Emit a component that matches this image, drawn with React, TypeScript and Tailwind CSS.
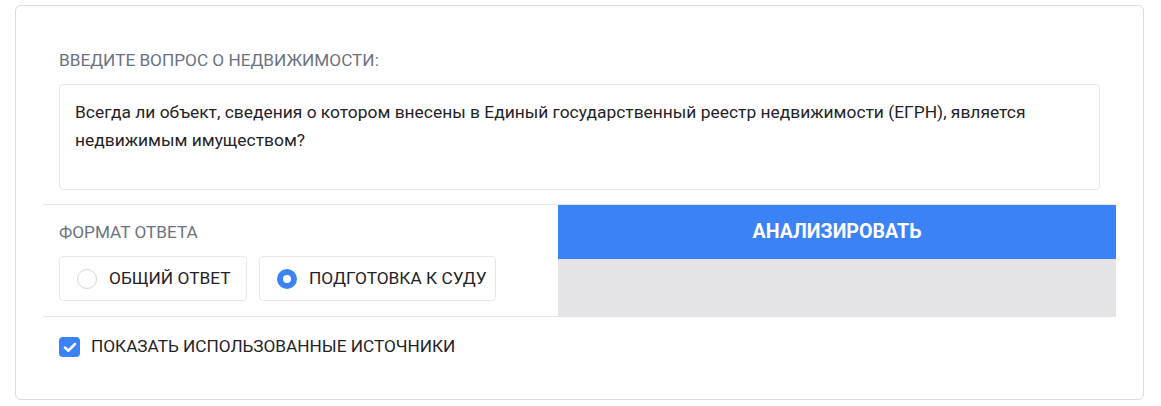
import { useState } from 'react';

type Mode = 'general' | 'court';

export default function App() {
  const [mode, setMode] = useState<Mode>('court');
  const [showSources, setShowSources] = useState(true);

  const options: { key: Mode; label: string; width: string }[] = [
    { key: 'general', label: 'ОБЩИЙ ОТВЕТ', width: 'w-[188px]' },
    { key: 'court', label: 'ПОДГОТОВКА К СУДУ', width: 'w-[237px]' },
  ];

  return (
    <div className="h-[406px] w-full bg-white pt-[5px] pl-[15px] font-['Roboto','Noto_Sans',sans-serif]">
      <div className="h-[395px] w-[1129px] rounded-md border border-[#dcdcdc] bg-white px-[27px] pt-[42px]">
        {/* Question */}
        <div className="px-4">
          <div className="text-[17.2px] leading-6 text-[#6b7280]">ВВЕДИТЕ ВОПРОС О НЕДВИЖИМОСТИ:</div>
          <div className="mt-3 h-[106px] rounded border border-[#e5e7eb] px-[15px] pt-[13px] text-[17.4px] leading-[28px] text-[#1f2328]">
            Всегда ли объект, сведения о котором внесены в Единый государственный реестр недвижимости (ЕГРН), является
            <br />
            недвижимым имуществом?
          </div>
        </div>

        {/* Format + action */}
        <div className="mt-[14px] flex border-t border-[#e5e7eb]">
          <div className="w-[515px] border-b border-[#e5e7eb] px-4 pt-[15px] pb-[15px]">
            <div className="text-[17.2px] leading-6 text-[#6b7280]">ФОРМАТ ОТВЕТА</div>
            <div className="mt-3 flex gap-3">
              {options.map((o) => (
                <button
                  key={o.key}
                  type="button"
                  onClick={() => setMode(o.key)}
                  className={`flex h-[45px] items-center gap-3 rounded border border-[#e5e7eb] bg-white pl-[17px] ${o.width}`}
                >
                  {mode === o.key ? (
                    <span className="h-5 w-5 rounded-full border-[6px] border-[#3b82f6] bg-white" />
                  ) : (
                    <span className="h-5 w-5 rounded-full border border-[#d1d5db] bg-white" />
                  )}
                  <span className="text-[17.3px] text-[#1f2328]">{o.label}</span>
                </button>
              ))}
            </div>
          </div>
          <div className="flex flex-1 flex-col">
            <button
              type="button"
              className="h-[54px] bg-[#3b82f6] text-[19.6px] font-bold text-white"
            >
              АНАЛИЗИРОВАТЬ
            </button>
            <div className="h-[58px] bg-[#e4e4e7]" />
          </div>
        </div>

        {/* Sources */}
        <label className="mt-[17px] flex cursor-pointer items-center gap-[11px] pl-4">
          <button
            type="button"
            onClick={() => setShowSources((v) => !v)}
            className={`flex h-5 w-[21px] items-center justify-center rounded ${showSources ? 'bg-[#3b82f6]' : 'border border-[#d1d5db] bg-white'}`}
          >
            {showSources && (
              <svg viewBox="0 0 16 16" className="h-4 w-4" fill="none" stroke="white" strokeWidth="2.6" strokeLinecap="round" strokeLinejoin="round">
                <path d="M3 8.6l3.4 3.1L13 5" />
              </svg>
            )}
          </button>
          <span className="text-[17.2px] text-[#1f2328]">ПОКАЗАТЬ ИСПОЛЬЗОВАННЫЕ ИСТОЧНИКИ</span>
        </label>
      </div>
    </div>
  );
}
